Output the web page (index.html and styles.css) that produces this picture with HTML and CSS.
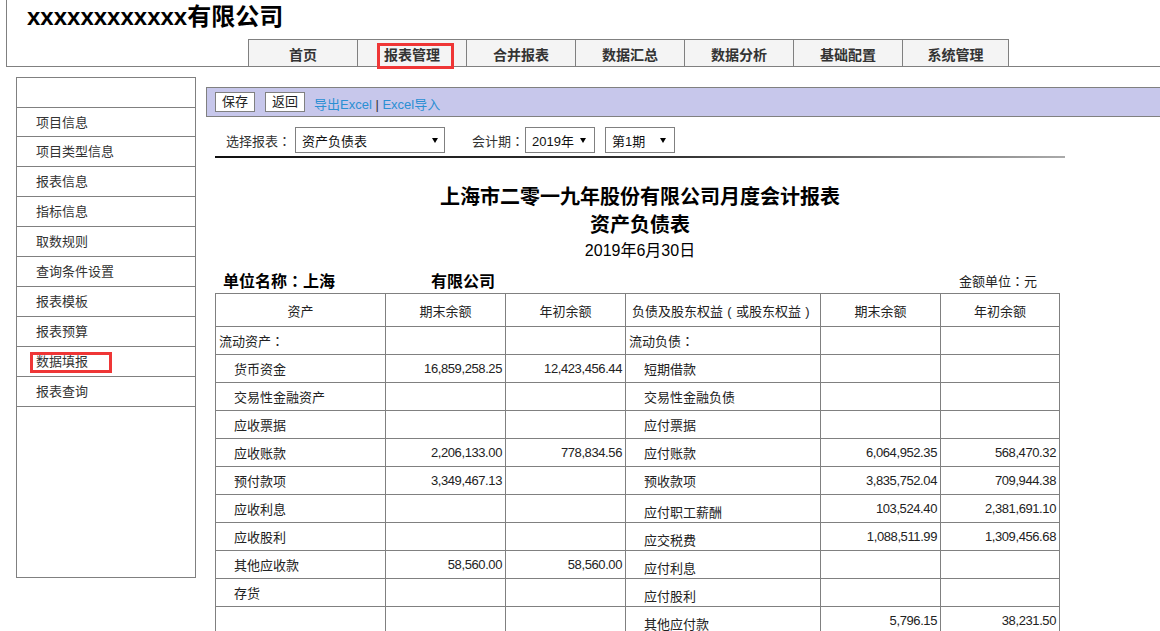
FILE: index.html
```html
<!DOCTYPE html>
<html lang="zh-CN">
<head>
<meta charset="utf-8">
<title>报表管理 - 数据填报</title>
<link rel="stylesheet" href="styles.css">
</head>
<body>
<header class="top">
  <h1 class="brand">xxxxxxxxxxxx有限公司</h1>
  <nav class="tabs">
    <a class="tab">首页</a>
    <a class="tab">报表管理<span class="mark mark-tab"></span></a>
    <a class="tab">合并报表</a>
    <a class="tab">数据汇总</a>
    <a class="tab">数据分析</a>
    <a class="tab">基础配置</a>
    <a class="tab">系统管理</a>
  </nav>
</header>

<div class="page">
  <aside class="side">
    <div class="side-head"></div>
    <ul class="side-list">
      <li>项目信息</li>
      <li>项目类型信息</li>
      <li>报表信息</li>
      <li>指标信息</li>
      <li>取数规则</li>
      <li>查询条件设置</li>
      <li>报表模板</li>
      <li>报表预算</li>
      <li>数据填报<span class="mark mark-side"></span></li>
      <li>报表查询</li>
    </ul>
  </aside>

  <main class="main">
    <div class="toolbar">
      <button class="btn">保存</button>
      <button class="btn btn-back">返回</button>
      <span class="links"><a class="link">导出Excel</a> | <a class="link">Excel导入</a></span>
    </div>

    <div class="content">
      <div class="filters">
        <span class="label">选择报表<span class="pn" lang="zh-TW">：</span></span>
        <div class="select sel-report"><span>资产负债表</span><i class="arrow"></i></div>
        <span class="label label-period">会计期<span class="pn" lang="zh-TW">：</span></span>
        <div class="select sel-year"><span>2019年</span><i class="arrow"></i></div>
        <div class="select sel-term"><span>第1期</span><i class="arrow"></i></div>
      </div>
      <div class="rule"></div>

      <div class="report-head">
        <div class="t1">上海市二零一九年股份有限公司月度会计报表</div>
        <div class="t1">资产负债表</div>
        <div class="date">2019年6月30日</div>
      </div>

      <div class="unit">
        <span class="unit-name">单位名称<span class="pn" lang="zh-TW">：</span>上海<span class="blank"></span>有限公司</span>
        <span class="unit-money">金额单位<span class="pn" lang="zh-TW">：</span>元</span>
      </div>

      <table class="sheet">
        <colgroup>
          <col class="c1"><col class="c2"><col class="c2"><col class="c4"><col class="c2"><col class="c6">
        </colgroup>
        <thead>
          <tr>
            <th>资产</th><th>期末余额</th><th>年初余额</th>
            <th>负债及股东权益<span class="par">(</span>或股东权益<span class="par">)</span></th><th>期末余额</th><th>年初余额</th>
          </tr>
        </thead>
        <tbody>
          <tr><td class="lbl">流动资产<span class="pn" lang="zh-TW">：</span></td><td></td><td></td><td class="lbl">流动负债<span class="pn" lang="zh-TW">：</span></td><td></td><td></td></tr>
          <tr><td class="ind">货币资金</td><td class="num">16,859,258.25</td><td class="num">12,423,456.44</td><td class="ind">短期借款</td><td></td><td></td></tr>
          <tr><td class="ind">交易性金融资产</td><td></td><td></td><td class="ind">交易性金融负债</td><td></td><td></td></tr>
          <tr><td class="ind">应收票据</td><td></td><td></td><td class="ind">应付票据</td><td></td><td></td></tr>
          <tr><td class="ind">应收账款</td><td class="num">2,206,133.00</td><td class="num">778,834.56</td><td class="ind">应付账款</td><td class="num">6,064,952.35</td><td class="num">568,470.32</td></tr>
          <tr><td class="ind">预付款项</td><td class="num">3,349,467.13</td><td></td><td class="ind">预收款项</td><td class="num">3,835,752.04</td><td class="num">709,944.38</td></tr>
          <tr><td class="ind">应收利息</td><td></td><td></td><td class="ind low">应付职工薪酬</td><td class="num">103,524.40</td><td class="num">2,381,691.10</td></tr>
          <tr><td class="ind">应收股利</td><td></td><td></td><td class="ind low">应交税费</td><td class="num">1,088,511.99</td><td class="num">1,309,456.68</td></tr>
          <tr><td class="ind">其他应收款</td><td class="num">58,560.00</td><td class="num">58,560.00</td><td class="ind low">应付利息</td><td></td><td></td></tr>
          <tr><td class="ind">存货</td><td></td><td></td><td class="ind low">应付股利</td><td></td><td></td></tr>
          <tr><td></td><td></td><td></td><td class="ind low">其他应付款</td><td class="num">5,796.15</td><td class="num">38,231.50</td></tr>
          <tr><td></td><td></td><td></td><td class="ind low">一年内到期的非流动负债</td><td></td><td></td></tr>
        </tbody>
      </table>
    </div>
  </main>
</div>
</body>
</html>
```
FILE: styles.css
```css
html, body {
  margin: 0;
  padding: 0;
}

body {
  width: 1160px;
  height: 631px;
  overflow: hidden;
  background: #fff;
  color: #222;
  font-family: "Liberation Sans", "Noto Sans CJK SC", sans-serif;
  font-size: 13px;
}

/* full-width punctuation drawn centred, as in the reference */
.pn {
  font-family: "Noto Sans CJK TC", "Noto Sans CJK SC", sans-serif;
}

.par {
  display: inline-block;
  width: 13px;
  text-align: center;
}

/* ---------- header ---------- */
.top {
  margin-left: 6px;
  height: 66px;
  border-left: 1px solid #808080;
  border-bottom: 1px solid #808080;
  display: flex;
  flex-direction: column;
  position: relative;
  z-index: 2;
}

.brand {
  margin: 0;
  height: 39px;
  box-sizing: border-box;
  padding: 2px 0 0 20px;
  font-size: 24px;
  line-height: 30px;
  font-weight: bold;
  color: #000;
}

.tabs {
  display: flex;
  margin-left: 241px;
}

.tab {
  position: relative;
  width: 109px;
  height: 27px;
  box-sizing: border-box;
  padding-top: 1px;
  border-left: 1px solid #808080;
  border-top: 1px solid #808080;
  background: #f4f4f4;
  display: flex;
  align-items: center;
  justify-content: center;
  font-size: 14px;
  font-weight: bold;
  color: #333;
}

.tab:last-child {
  width: 107px;
  border-right: 1px solid #808080;
}

/* red annotation boxes */
.mark {
  position: absolute;
  box-sizing: border-box;
  border: 3px solid #ef3636;
  pointer-events: none;
}

.mark-tab {
  left: 19px;
  top: 3px;
  width: 77px;
  height: 26px;
}

.mark-side {
  left: 13px;
  top: 5px;
  width: 82px;
  height: 21px;
}

/* ---------- page ---------- */
.page {
  display: flex;
  align-items: flex-start;
  padding-left: 16px;
  margin-top: 10px;
}

.side {
  flex: none;
  width: 178px;
  height: 499px;
  border: 1px solid #808080;
}

.side-head {
  height: 29px;
  border-bottom: 1px solid #808080;
}

.side-list {
  list-style: none;
  margin: 0;
  padding: 0;
}

.side-list li {
  position: relative;
  height: 29px;
  box-sizing: border-box;
  padding: 1px 0 0 19px;
  line-height: 28px;
  border-bottom: 1px solid #808080;
  font-size: 13px;
  color: #333;
}

.side-list li + li {
  height: 30px;
}

/* ---------- main ---------- */
.main {
  flex: 1;
  margin-left: 10px;
  margin-top: 10px;
}

.toolbar {
  height: 28px;
  border: 1px solid #808080;
  border-right: none;
  background: #c7c7eb;
  display: flex;
  align-items: center;
  padding-left: 8px;
}

.btn {
  height: 20px;
  box-sizing: border-box;
  margin: 0;
  padding: 0 6px;
  border: 1px solid #808080;
  background: #fff;
  font-family: inherit;
  font-size: 13px;
  line-height: 18px;
  color: #222;
}

.btn-back {
  margin-left: 10px;
}

.links {
  margin-left: 9px;
  padding-top: 3px;
  font-size: 13px;
  color: #333;
}

.link {
  color: #2b8fd3;
}

.content {
  width: 850px;
  padding-left: 9px;
}

.filters {
  display: flex;
  align-items: center;
  height: 26px;
  margin-top: 10px;
  padding-left: 11px;
}

.label {
  font-size: 13px;
  color: #333;
}

.label-period {
  margin-left: 27px;
}

.select {
  height: 26px;
  box-sizing: border-box;
  border: 1px solid #808080;
  display: flex;
  align-items: center;
  justify-content: space-between;
  padding: 0 6px 0 6px;
  font-size: 13px;
  color: #111;
}

.sel-report {
  width: 150px;
  margin-left: 4px;
}

.sel-year {
  width: 70px;
  margin-left: 1px;
  padding-right: 8px;
}

.sel-term {
  width: 70px;
  margin-left: 10px;
  padding-right: 8px;
}

.arrow {
  width: 0;
  height: 0;
  border-left: 3px solid transparent;
  border-right: 3px solid transparent;
  border-top: 5px solid #000;
}

.rule {
  margin-top: 3px;
  height: 2px;
  background: linear-gradient(to right, #111 0%, #333 55%, #aaa 100%);
}

.report-head {
  margin-top: 25px;
  text-align: center;
  color: #000;
}

.t1 {
  font-size: 20px;
  line-height: 28px;
  font-weight: bold;
}

.date {
  font-size: 16px;
  line-height: 24px;
}

.unit {
  height: 30px;
  box-sizing: border-box;
  padding: 4px 28px 0 8px;
  display: flex;
  justify-content: space-between;
  align-items: center;
  color: #000;
}

.unit-name {
  font-size: 16px;
  font-weight: bold;
}

.unit-name .blank {
  display: inline-block;
  width: 96px;
}

.unit-money {
  font-size: 13px;
  color: #222;
}

/* ---------- table ---------- */
.sheet {
  border-collapse: collapse;
  table-layout: fixed;
  width: 844px;
}

.c1 { width: 170px; }
.c2 { width: 120px; }
.c4 { width: 195px; }
.c6 { width: 119px; }

.sheet th,
.sheet td {
  border: 1px solid #808080;
  padding: 0 3px;
  font-size: 13px;
  white-space: nowrap;
  overflow: hidden;
  vertical-align: middle;
  color: #222;
}

.sheet thead tr {
  height: 33px;
}

.sheet th {
  font-weight: normal;
  text-align: center;
}

.sheet tbody tr {
  height: 28px;
}

.sheet td.ind {
  padding-left: 18px;
}

.sheet td.low {
  padding-top: 6px;
}

.sheet td.num {
  text-align: right;
  letter-spacing: -0.4px;
}
```
